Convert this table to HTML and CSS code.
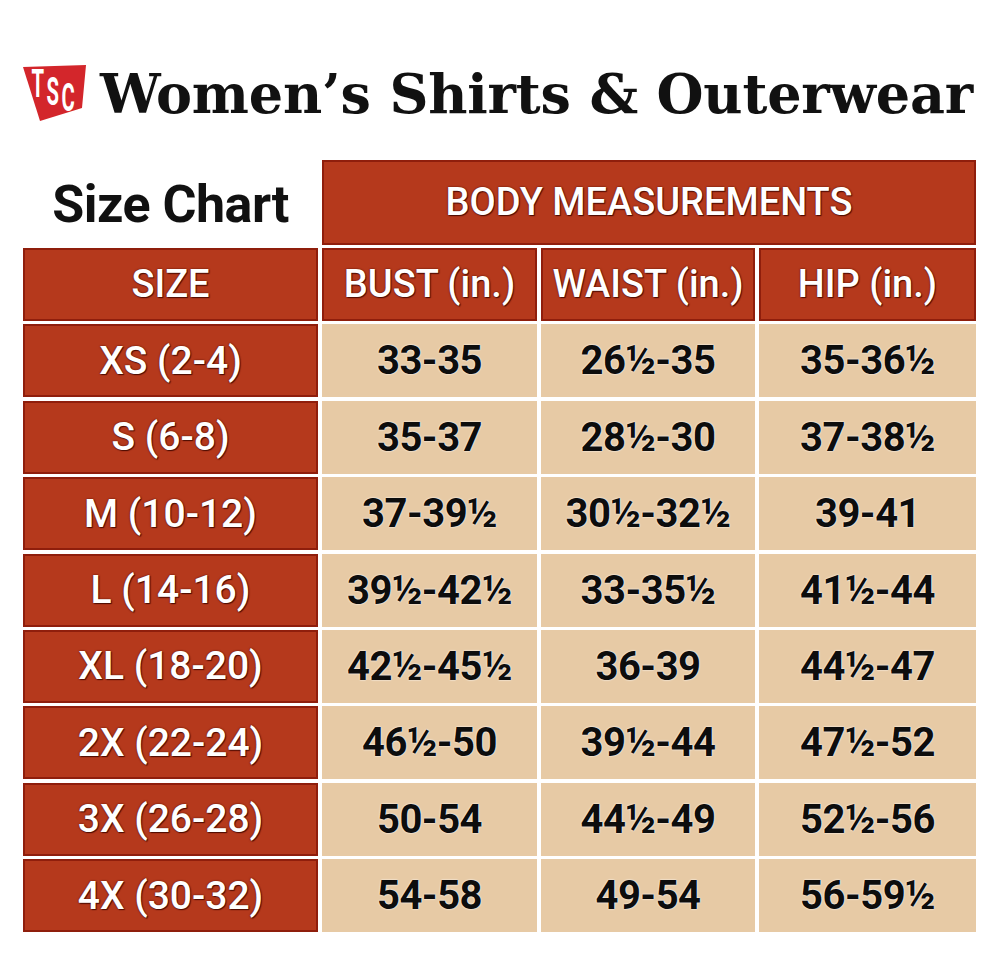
FILE: index.html
```html
<!DOCTYPE html>
<html lang="en">
<head>
<meta charset="utf-8">
<title>Women’s Shirts &amp; Outerwear Size Chart</title>
<link rel="stylesheet" href="styles.css">
</head>
<body>
<header class="title-bar">
  <svg class="logo" width="64" height="72" viewBox="0 -8 64 72" aria-label="TSC">
    <polygon points="0,2 63,0 59,43 17,56" fill="#d3262b"/>
    <text class="logo-letter" transform="translate(8.5 32) scale(0.52 1)" font-size="39">T</text>
    <text class="logo-letter" transform="translate(23.5 40) scale(0.52 1)" font-size="39">S</text>
    <text class="logo-letter" transform="translate(38.5 46) scale(0.52 1)" font-size="39">C</text>
  </svg>
  <h1 class="title">Women’s Shirts &amp; Outerwear</h1>
</header>

<main class="chart">
  <div class="cell caption">Size Chart</div>
  <div class="cell head span3">BODY MEASUREMENTS</div>

  <div class="cell head">SIZE</div>
  <div class="cell head">BUST (in.)</div>
  <div class="cell head">WAIST (in.)</div>
  <div class="cell head">HIP (in.)</div>

  <div class="cell size">XS (2-4)</div>
  <div class="cell val">33-35</div>
  <div class="cell val">26½-35</div>
  <div class="cell val">35-36½</div>

  <div class="cell size">S (6-8)</div>
  <div class="cell val">35-37</div>
  <div class="cell val">28½-30</div>
  <div class="cell val">37-38½</div>

  <div class="cell size">M (10-12)</div>
  <div class="cell val">37-39½</div>
  <div class="cell val">30½-32½</div>
  <div class="cell val">39-41</div>

  <div class="cell size">L (14-16)</div>
  <div class="cell val">39½-42½</div>
  <div class="cell val">33-35½</div>
  <div class="cell val">41½-44</div>

  <div class="cell size">XL (18-20)</div>
  <div class="cell val">42½-45½</div>
  <div class="cell val">36-39</div>
  <div class="cell val">44½-47</div>

  <div class="cell size">2X (22-24)</div>
  <div class="cell val">46½-50</div>
  <div class="cell val">39½-44</div>
  <div class="cell val">47½-52</div>

  <div class="cell size">3X (26-28)</div>
  <div class="cell val">50-54</div>
  <div class="cell val">44½-49</div>
  <div class="cell val">52½-56</div>

  <div class="cell size">4X (30-32)</div>
  <div class="cell val">54-58</div>
  <div class="cell val">49-54</div>
  <div class="cell val">56-59½</div>
</main>
</body>
</html>
```

FILE: styles.css
```css
html, body {
  margin: 0;
  padding: 0;
  background: #ffffff;
}

body {
  width: 1000px;
  font-family: Roboto, "Liberation Sans", sans-serif;
}

.title-bar {
  display: flex;
  align-items: flex-start;
  gap: 13px;
  padding: 57px 0 0 23px;
  height: 66px;
}

.logo {
  flex: none;
  display: block;
}

.logo-letter {
  fill: #ffffff;
  font-family: Roboto, "Liberation Sans", sans-serif;
  font-weight: 700;
}

.title {
  margin: 10px 0 0;
  font-family: "DejaVu Serif", "Liberation Serif", serif;
  font-weight: 700;
  font-size: 54px;
  line-height: 1;
  color: #111111;
  letter-spacing: -0.2px;
  white-space: nowrap;
}

.chart {
  display: grid;
  grid-template-columns: 295px 215px 214px 217px;
  grid-template-rows: 84.6px repeat(9, 73px);
  column-gap: 4px;
  row-gap: 3.4px;
  margin: 37px 0 0 23px;
  width: 953px;
}

.cell {
  display: flex;
  align-items: center;
  justify-content: center;
  white-space: nowrap;
}

.caption {
  font-weight: 700;
  font-size: 52px;
  color: #111111;
  letter-spacing: -0.5px;
  padding-top: 4px;
}

.span3 {
  grid-column: 2 / 5;
}

.head,
.size {
  background: #b5391c;
  box-shadow: inset 0 0 0 2px #8f1e0c;
  color: #ffffff;
  font-weight: 500;
  font-size: 38px;
  text-shadow: 0 0 2px #4d0c03, 1px 1px 1px #4d0c03;
}

.size {
  font-size: 39px;
}

.val {
  background: #e7caa5;
  color: #0d0d0d;
  font-weight: 700;
  font-size: 40px;
  letter-spacing: -0.5px;
  text-shadow: 0 0 2px #ffffff, 0 0 1px #ffffff;
}
```
